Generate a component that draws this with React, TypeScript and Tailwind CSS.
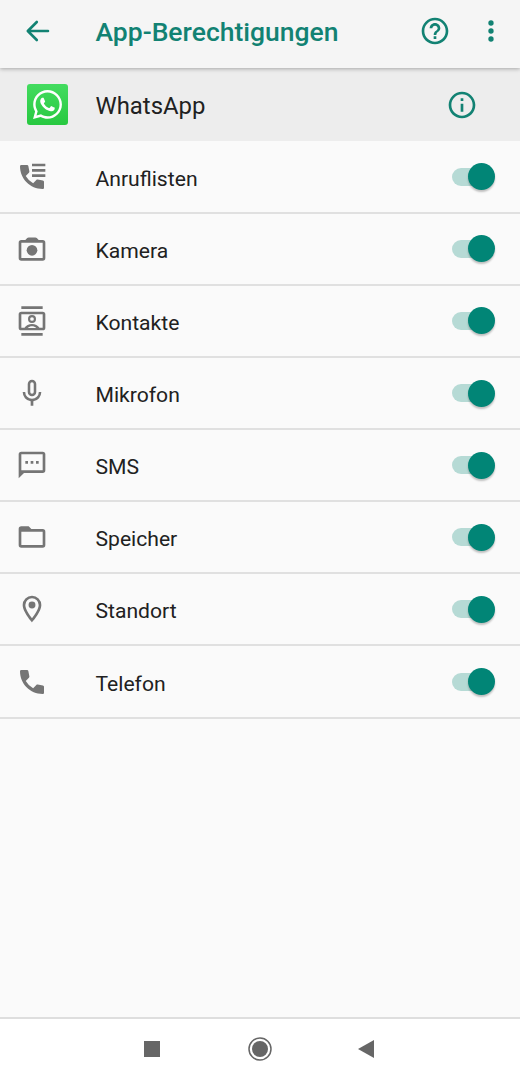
import type { ReactNode } from "react";
import { FaWhatsapp } from "react-icons/fa";
import { MdHelpOutline, MdInfoOutline } from "react-icons/md";

const phone =
  "M7.3 11.2 9.700 8.800c.3-.3.400-.65.320-1.050L9.250 3.800C9.150 3.300 8.800 3 8.300 3H4c-.6 0-1 .45-1 1 0 9.400 7.600 17 17 17 .6 0 1-.45 1-1v-4.300c0-.5-.35-.9-.85-1l-3.850-.75c-.4-.08-.75.020-1.050.32l-2.400 2.400A14.800 14.800 0 0 1 7.300 11.200z";

const icons: Record<string, ReactNode> = {
  Anruflisten: (
    <>
      <path d={phone} />
      <path d="M12 2h10v2H12zM12 6h10v2H12zM12 10h10v2H12z" />
    </>
  ),
  Kamera: (
    <>
      <path fillRule="evenodd" d="M4 5.300h3L8.400 3.800c.3-.4.600-.5 1.100-.5h5c.5 0 .8.100 1.100.5L17 5.300h3a2 2 0 0 1 2 2v11.500a2 2 0 0 1-2 2H4a2 2 0 0 1-2-2V7.300a2 2 0 0 1 2-2zm0 2v11.500h16V7.300z" />
      <circle cx="12" cy="13" r="4" />
    </>
  ),
  Kontakte: (
    <>
      <path d="M4 1h16v2H4zM4 21h16v2H4z" />
      <path fillRule="evenodd" d="M4 5h16a2 2 0 0 1 2 2v10a2 2 0 0 1-2 2H4a2 2 0 0 1-2-2V7a2 2 0 0 1 2-2zm0 2v10h2.400c1-1.800 3.300-2.800 5.600-2.800s4.600 1 5.600 2.800H20V7z" />
      <circle cx="12" cy="10.500" r="2.200" fill="none" stroke="currentColor" strokeWidth="1.600" />
      <path d="M8.800 17.200c.8-.9 2-1.300 3.200-1.300s2.400.4 3.200 1.300z" className="fill-[#fafafa]" />
    </>
  ),
  Mikrofon: (
    <path fillRule="evenodd" d="M12 14.500a3.200 3.200 0 0 0 3.200-3.200v-6a3.200 3.200 0 0 0-6.400 0v6a3.200 3.200 0 0 0 3.200 3.200zm-1.300-9.200a1.300 1.300 0 0 1 2.600 0v6a1.300 1.300 0 0 1-2.600 0zM17.100 11.300a5.100 5.100 0 0 1-10.200 0H5a7 7 0 0 0 6 6.900v3.300h2v-3.300a7 7 0 0 0 6-6.900z" />
  ),
  SMS: (
    <>
      <path fillRule="evenodd" d="M4 2h16a2 2 0 0 1 2 2v12a2 2 0 0 1-2 2H6l-4 4V4a2 2 0 0 1 2-2zm0 2v12h16V4z" />
      <path d="M7 9h2v2H7zM11 9h2v2h-2zM15 9h2v2h-2z" />
    </>
  ),
  Speicher: (
    <path fillRule="evenodd" d="M4 4h5.500l2 2H20a2 2 0 0 1 2 2v10a2 2 0 0 1-2 2H4a2 2 0 0 1-2-2V6a2 2 0 0 1 2-2zm0 4v10h16V8z" />
  ),
  Standort: (
    <>
      <path fillRule="evenodd" d="M12 2a7 7 0 0 0-7 7c0 5.250 7 13 7 13s7-7.750 7-13a7 7 0 0 0-7-7zm0 2A5 5 0 0 0 7 9c0 2.880 2.880 7.190 5 9.880C14.120 16.190 17 11.880 17 9A5 5 0 0 0 12 4z" />
      <circle cx="12" cy="9" r="2.600" />
    </>
  ),
  Telefon: <path d={phone} />,
};

function Toggle() {
  return (
    <span className="flex h-[27px] w-[42px] items-center">
      <span className="h-[18px] w-[30px] shrink-0 rounded-full bg-[#b6dad5]" />
      <span className="-ml-[14.500px] size-[27px] shrink-0 rounded-full bg-[#018576] shadow-[0_2px_2px_rgba(0,0,0,0.24)]" />
    </span>
  );
}

export default function App() {
  return (
    <div className="flex h-[1080px] w-[520px] flex-col overflow-hidden bg-[#fafafa] font-[Roboto,sans-serif] text-[#212121]">
      <header className="z-10 flex h-[68px] shrink-0 items-center bg-[#f5f5f5] pb-[7px] text-[#128273] shadow-[0_1px_4px_rgba(0,0,0,0.3)]">
        <svg className="ml-[22px] size-8" viewBox="0 0 32 32" fill="none" stroke="currentColor" strokeWidth="2.600" strokeLinecap="round" strokeLinejoin="round">
          <path d="M26 16H6M14.800 7 5.800 16l9 9" />
        </svg>
        <h1 className="ml-[41.500px] flex-1 whitespace-nowrap pt-[2px] text-[26.500px] font-medium leading-8">App-Berechtigungen</h1>
        <MdHelpOutline className="mr-6 size-8" />
        <svg className="mr-[13.500px] size-8" viewBox="0 0 24 24" fill="currentColor">
          <circle cx="12" cy="6" r="2" />
          <circle cx="12" cy="12" r="2" />
          <circle cx="12" cy="18" r="2" />
        </svg>
      </header>
      <section className="flex h-[73px] shrink-0 items-center bg-[#ededed]">
        <span className="ml-[27px] flex size-[41px] items-center justify-center rounded-[3px] bg-linear-to-b from-[#43dc5f] to-[#27c840] text-white">
          <FaWhatsapp className="size-[33px]" />
        </span>
        <span className="ml-[27.500px] flex-1 pt-[2px] text-[23.900px] leading-8">WhatsApp</span>
        <MdInfoOutline className="mr-[42.500px] size-8 text-[#128273]" />
      </section>
      <ul className="flex-1 pt-[0.600px]">
        {Object.entries(icons).map(([name, icon]) => (
          <li key={name} className="flex h-[72.130px] items-center border-b-2 border-[#e0e0e0]">
            <svg className="ml-[15.700px] size-8 text-[#757575]" viewBox="0 0 24 24" fill="currentColor">
              {icon}
            </svg>
            <span className="ml-[47.800px] flex-1 pt-[4px] text-[21.130px] leading-7">{name}</span>
            <span className="mr-[26px]">
              <Toggle />
            </span>
          </li>
        ))}
      </ul>
      <nav className="flex h-[63px] shrink-0 items-center border-t-2 border-[#dedede] bg-white pb-[2px] text-[#666666]">
        <span className="ml-36 size-4 bg-[#666666]" />
        <svg className="ml-[88px] size-6" viewBox="0 0 24 24">
          <circle cx="12" cy="12" r="11" fill="none" stroke="currentColor" strokeWidth="1.500" />
          <circle cx="12" cy="12" r="8" fill="currentColor" />
        </svg>
        <svg className="ml-[86px] h-[18px] w-4" viewBox="0 0 16 18" fill="currentColor">
          <path d="M16 0v18L0 9z" />
        </svg>
      </nav>
    </div>
  );
}
